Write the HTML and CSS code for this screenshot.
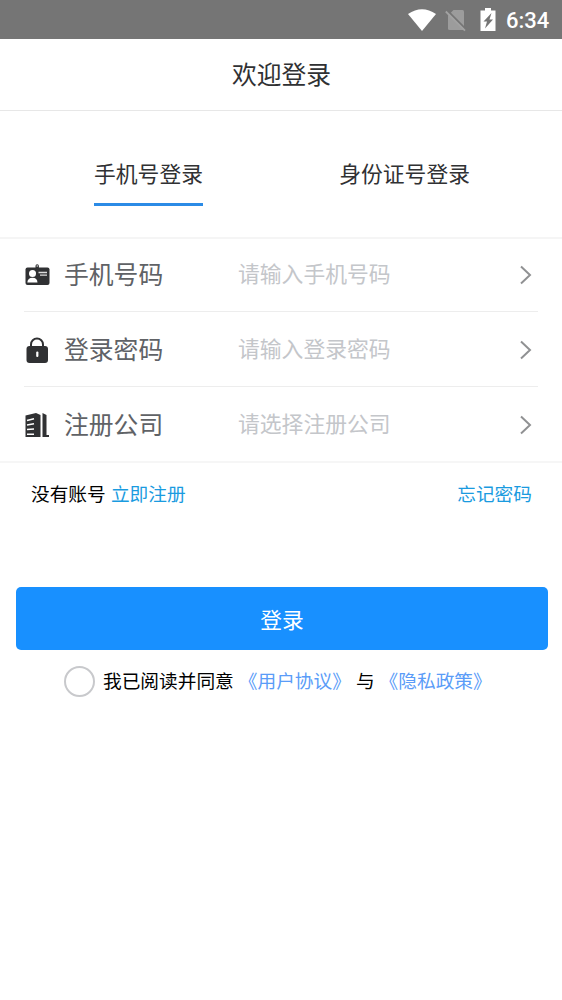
FILE: index.html
```html
<!DOCTYPE html>
<html lang="zh-CN">
<head>
<meta charset="utf-8">
<title>欢迎登录</title>
<link rel="stylesheet" href="styles.css">
</head>
<body>
<div class="status">
  <svg class="wifi" width="28" height="22" viewBox="0 0 28 22"><path d="M0 5Q14-4.500 28 5L14 22Z" fill="#fff"/></svg>
  <svg class="sim" width="22" height="24" viewBox="0 0 22 24"><path d="M8.500 2H17.500Q19 2 19 3.500V22H4.500Q3 22 3 20.500V7.500Z" fill="#9c9c9c"/><path d="M1.500 1.800L22 22.300" stroke="#757575" stroke-width="2"/><path d="M.8 3.500L20 22.700" stroke="#a2a2a2" stroke-width="1.800"/></svg>
  <svg class="battery" width="16" height="23" viewBox="0 0 16 23"><path d="M5 0H11V2.500H15.500V23H.5V2.500H5Z" fill="#fff"/><path d="M11.500 5L3.500 13.500H7L5 20.500L13 11.500H9.500Z" fill="#757575"/></svg>
  <span class="time">6:34</span>
</div>
<header class="title">欢迎登录</header>
<nav class="tabs">
  <div class="tab active">手机号登录</div>
  <div class="tab">身份证号登录</div>
</nav>
<main>
  <section class="fields">
    <div class="field">
      <svg class="icon" width="26" height="26" viewBox="0 0 26 26"><rect x="1.500" y="5.500" width="24" height="17.500" rx="2" fill="#303133"/><path d="M11.500 7V4a1.700 1.700 0 0 1 3.400 0V7" fill="#303133"/><circle cx="13.200" cy="4" r=".7" fill="#fff"/><circle cx="8.500" cy="11.500" r="3.500" fill="#fff"/><path d="M3.300 20.500Q3.700 15.800 8.500 15.800T13.500 20.500Z" fill="#fff"/><path d="M14.500 10.500H23M16 13.200H23" stroke="#ddd" stroke-width="1.300"/></svg>
      <span class="label">手机号码</span><span class="hint">请输入手机号码</span>
      <svg class="chevron" width="14" height="22" viewBox="0 0 14 22"><path d="M2 2.500L11 11L2 19.500"/></svg>
    </div>
    <div class="field">
      <svg class="icon" width="26" height="26" viewBox="0 0 26 26"><path d="M7 11V7.500a6 6 0 0 1 12 0V11" fill="none" stroke="#303133" stroke-width="2"/><rect x="2.500" y="9" width="21.500" height="17" rx="3" fill="#303133"/><rect x="12.200" y="14.500" width="2.200" height="5.500" rx="1" fill="#fff"/></svg>
      <span class="label">登录密码</span><span class="hint">请输入登录密码</span>
      <svg class="chevron" width="14" height="22" viewBox="0 0 14 22"><path d="M2 2.500L11 11L2 19.500"/></svg>
    </div>
    <div class="field">
      <svg class="icon" width="26" height="26" viewBox="0 0 26 26"><path d="M1.500 3.500L12 1L16.500 3V25H1.500ZM18.500 1L22.500 3V23H25V25H18.500Z" fill="#303133"/><path d="M3 8.500L10 6.800M3 13L10 11.800M3 17.500L10 17M3 22.300H10" stroke="#fff" stroke-width="1.600"/></svg>
      <span class="label">注册公司</span><span class="hint">请选择注册公司</span>
      <svg class="chevron" width="14" height="22" viewBox="0 0 14 22"><path d="M2 2.500L11 11L2 19.500"/></svg>
    </div>
  </section>
  <div class="links">
    <div>没有账号 <a>立即注册</a></div>
    <a>忘记密码</a>
  </div>
  <button class="submit">登录</button>
  <div class="agree">
    <span class="radio"></span>
    <div class="terms">我已阅读并同意 <a>《用户协议》</a> 与 <a>《隐私政策》</a></div>
  </div>
</main>
</body>
</html>
```
FILE: styles.css
```css
* { box-sizing: border-box; }
body {
  margin: 0;
  min-height: 1000px;
  background: #fff;
  color: #303133;
  font-family: "Noto Sans CJK SC", sans-serif;
}
.status {
  height: 39px;
  background: #757575;
  display: flex;
  align-items: center;
  padding-left: 408px;
}
.sim { margin-left: 9px; }
.battery { margin-left: 13px; }
.time {
  margin-left: 10px;
  color: #fff;
  font: 500 22px/39px Roboto, sans-serif;
  padding-top: 2px;
}
.title {
  height: 72px;
  border-bottom: 1px solid #e7e7e7;
  font-size: 24.8px;
  line-height: 68px;
  text-align: center;
  padding-left: 1px;
}
.tabs {
  height: 128px;
  border-bottom: 2px solid #f5f5f5;
  padding: 43px 92px 0 94px;
  display: flex;
  justify-content: space-between;
  align-items: flex-start;
}
.tab {
  height: 52px;
  font-size: 21.8px;
  line-height: 37px;
}
.active { border-bottom: 3px solid #2b8be6; }
.fields { border-bottom: 2px solid #f6f6f6; }
.field {
  height: 75px;
  margin: 0 24px;
  display: flex;
  align-items: center;
  border-bottom: 1px solid #ededed;
}
.field:first-child { height: 73px; padding-bottom: 2px; }
.field:last-child { height: 74px; border-bottom: 0; }
.icon { margin-top: 2px; }
.label {
  width: 174px;
  margin-left: 14px;
  color: #606266;
  font-size: 24.8px;
  line-height: 68px;
  padding-bottom: 2px;
}
.hint {
  flex: 1;
  color: #c4c6ca;
  font-size: 21.8px;
  line-height: 68px;
  padding-bottom: 2px;
}
.chevron {
  margin: 2px 5px 0 0;
  fill: none;
  stroke: #909193;
  stroke-width: 2;
}
.links {
  display: flex;
  justify-content: space-between;
  padding: 12px 30px 0 31px;
  color: #000;
  font-size: 18.7px;
  line-height: 36px;
}
.links div { word-spacing: 1px; }
.links a { color: #1a9bdf; }
.submit {
  display: block;
  width: 532px;
  height: 63px;
  margin: 76px 0 0 16px;
  padding: 0;
  border: 0;
  border-radius: 5px;
  background: #1890ff;
  color: #fff;
  font: 21.8px "Noto Sans CJK SC", sans-serif;
}
.agree {
  display: flex;
  align-items: center;
  padding: 15px 0 0 64px;
  color: #000;
  font-size: 18.7px;
  line-height: 30px;
}
.terms {
  padding-bottom: 2px;
  word-spacing: .8px;
}
.radio {
  width: 31px;
  height: 31px;
  margin-right: 8px;
  border: 2px solid #c8c9cc;
  border-radius: 50%;
}
.agree a { color: #5a9cf8; }
```
